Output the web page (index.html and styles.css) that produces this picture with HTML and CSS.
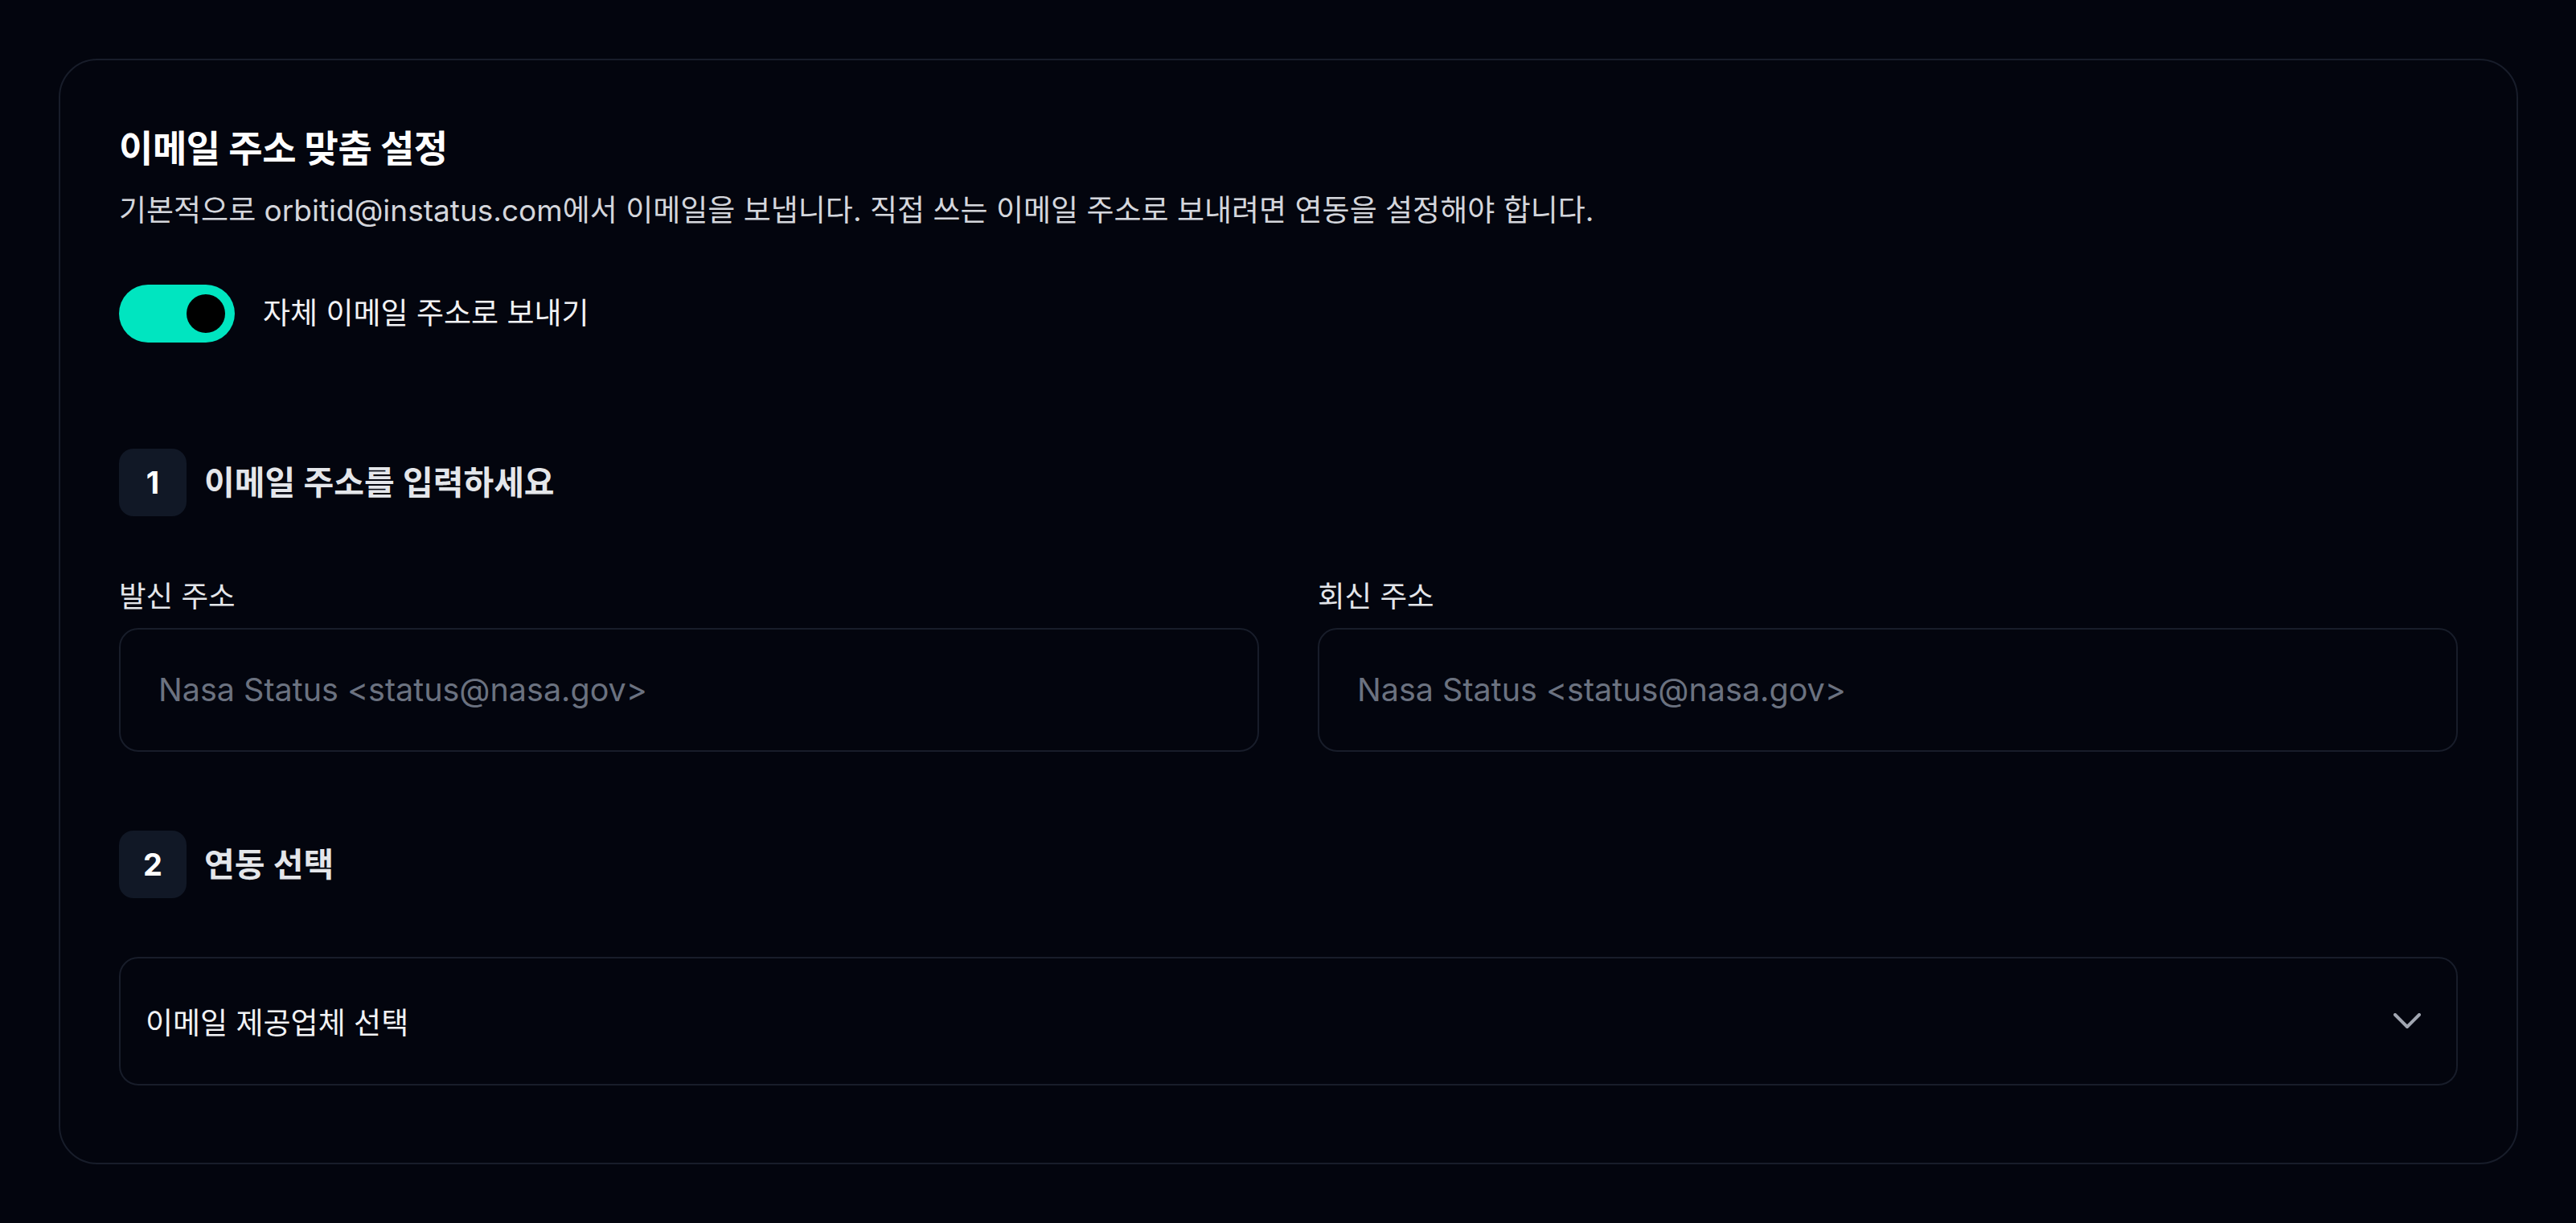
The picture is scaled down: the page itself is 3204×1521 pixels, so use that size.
FILE: index.html
```html
<!DOCTYPE html>
<html lang="ko">
<head>
<meta charset="utf-8">
<title>이메일 주소 맞춤 설정</title>
<link rel="stylesheet" href="styles.css">
</head>
<body>
<main class="page">
  <section class="card">
    <h1 class="card-title">이메일 주소 맞춤 설정</h1>
    <p class="card-desc">기본적으로 orbitid@instatus.com에서 이메일을 보냅니다. 직접 쓰는 이메일 주소로 보내려면 연동을 설정해야 합니다.</p>

    <div class="toggle-row">
      <span class="toggle" role="switch" aria-checked="true"><span class="toggle-knob"></span></span>
      <span class="toggle-label">자체 이메일 주소로 보내기</span>
    </div>

    <div class="step step-1">
      <span class="step-badge">1</span>
      <span class="step-title">이메일 주소를 입력하세요</span>
    </div>

    <div class="fields">
      <div class="field">
        <label class="field-label">발신 주소</label>
        <div class="input"><span class="placeholder">Nasa Status &lt;status@nasa.gov&gt;</span></div>
      </div>
      <div class="field">
        <label class="field-label">회신 주소</label>
        <div class="input"><span class="placeholder">Nasa Status &lt;status@nasa.gov&gt;</span></div>
      </div>
    </div>

    <div class="step step-2">
      <span class="step-badge">2</span>
      <span class="step-title">연동 선택</span>
    </div>

    <div class="select">
      <span class="select-text">이메일 제공업체 선택</span>
      <svg class="chevron" width="34" height="20" viewBox="0 0 34 20" fill="none">
        <path d="M2 2 L17 17 L32 2" stroke="#a1a6b1" stroke-width="4" stroke-linecap="round" stroke-linejoin="round"/>
      </svg>
    </div>
  </section>
</main>
</body>
</html>
```

FILE: styles.css
```css
* {
  box-sizing: border-box;
}

html, body {
  margin: 0;
  padding: 0;
  background: #03050e;
}

body {
  font-family: Inter, "Noto Sans CJK KR", sans-serif;
  color: #ffffff;
  min-height: 1521px;
}

.page {
  padding: 73px 72px 0 73px;
}

.card {
  border: 2px solid #181d2a;
  border-radius: 48px;
  background: #03050e;
  padding: 78px 73px 96px 73px;
  display: flex;
  flex-direction: column;
}

.card-title {
  margin: 0;
  font-size: 46px;
  line-height: 62px;
  font-weight: 700;
  color: #ffffff;
  letter-spacing: -0.4px;
}

.card-desc {
  margin: 22px 0 0 0;
  font-size: 37px;
  line-height: 50px;
  font-weight: 400;
  color: #d4d6dc;
}

.toggle-row {
  margin-top: 67px;
  display: flex;
  align-items: center;
  gap: 35px;
}

.toggle {
  width: 144px;
  height: 72px;
  border-radius: 36px;
  background: #00e5c0;
  display: flex;
  align-items: center;
  justify-content: flex-end;
  padding-right: 12px;
  flex-shrink: 0;
}

.toggle-knob {
  width: 48px;
  height: 48px;
  border-radius: 50%;
  background: #000000;
}

.toggle-label {
  font-size: 37px;
  line-height: 50px;
  color: #f1f2f4;
}

.step {
  display: flex;
  align-items: center;
  gap: 22px;
}

.step-1 {
  margin-top: 132px;
}

.step-2 {
  margin-top: 98px;
}

.step-badge {
  width: 84px;
  height: 84px;
  border-radius: 18px;
  background: #111826;
  color: #ffffff;
  font-size: 38px;
  font-weight: 700;
  display: flex;
  align-items: center;
  justify-content: center;
  flex-shrink: 0;
}

.step-title {
  font-size: 41px;
  line-height: 54px;
  font-weight: 600;
  color: #e4e6ea;
}

.fields {
  margin-top: 76px;
  display: grid;
  grid-template-columns: 1fr 1fr;
  column-gap: 73px;
}

.field {
  display: flex;
  flex-direction: column;
}

.field-label {
  font-size: 36.5px;
  line-height: 48px;
  color: #e4e6ea;
  margin-bottom: 15px;
}

.input {
  height: 154px;
  border: 2px solid #181d2a;
  border-radius: 24px;
  display: flex;
  align-items: center;
  padding-left: 47px;
}

.placeholder {
  font-size: 39.5px;
  color: #6b7280;
}

.select {
  margin-top: 73px;
  height: 160px;
  border: 2px solid #181d2a;
  border-radius: 24px;
  display: flex;
  align-items: center;
  justify-content: space-between;
  padding: 0 44px 0 31px;
}

.select-text {
  font-size: 37px;
  color: #f1f2f4;
}

.chevron {
  display: block;
}
```
